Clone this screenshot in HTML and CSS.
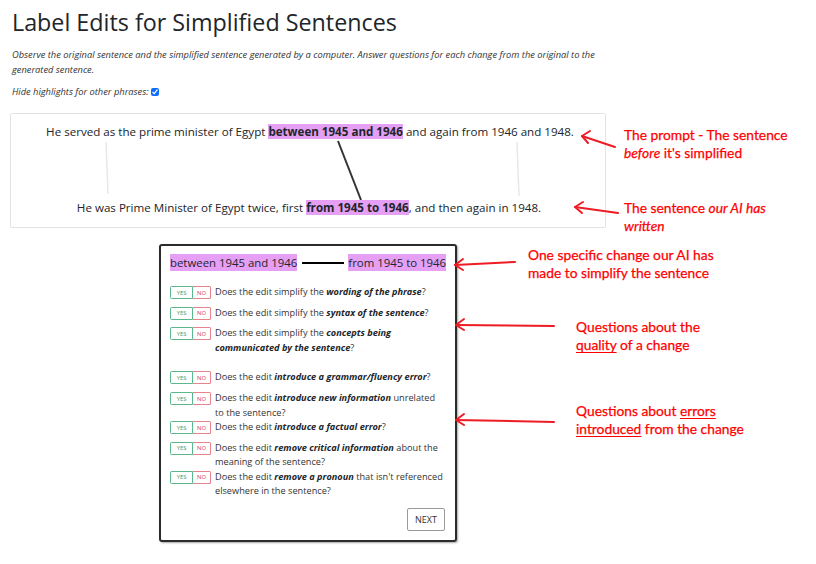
FILE: index.html
```html
<!DOCTYPE html>
<html>
<head>
<meta charset="utf-8">
<link rel="stylesheet" href="styles.css">
</head>
<body>
<div class="page">
  <h1 class="title">Label Edits for Simplified Sentences</h1>
  <p class="desc">Observe the original sentence and the simplified sentence generated by a computer. Answer questions for each change from the original to the generated sentence.</p>
  <label class="hide">Hide highlights for other phrases: <input type="checkbox" checked class="chk"></label>

  <div class="main">
    <div class="sentences">
      <svg class="links" width="596" height="115" viewBox="0 0 596 115">
        <line x1="95" y1="28" x2="97" y2="80" stroke="#e8e8e8" stroke-width="1.5"/>
        <line x1="506" y1="28" x2="508" y2="82" stroke="#e8e8e8" stroke-width="1.5"/>
        <line x1="327" y1="27" x2="350" y2="86" stroke="#333" stroke-width="2"/>
      </svg>
      <div class="sent s1">He served as the prime minister of Egypt <span class="hl b">between 1945 and 1946</span> and again from 1946 and 1948.</div>
      <div class="sent s2">He was Prime Minister of Egypt twice, first <span class="hl b">from 1945 to 1946</span>, and then again in 1948.</div>
    </div>

    <div class="card">
      <div class="edit-head">
        <span class="hl">between 1945 and 1946</span>
        <span class="dash"></span>
        <span class="hl">from 1945 to 1946</span>
      </div>
      <div class="group">
        <div class="q"><div class="yn"><span class="y">YES</span><span class="n">NO</span></div><div class="qt">Does the edit simplify the <b><i>wording of the phrase</i></b>?</div></div>
        <div class="q"><div class="yn"><span class="y">YES</span><span class="n">NO</span></div><div class="qt">Does the edit simplify the <b><i>syntax of the sentence</i></b>?</div></div>
        <div class="q"><div class="yn"><span class="y">YES</span><span class="n">NO</span></div><div class="qt">Does the edit simplify the <b><i>concepts being communicated by the sentence</i></b>?</div></div>
      </div>
      <div class="group last">
        <div class="q"><div class="yn"><span class="y">YES</span><span class="n">NO</span></div><div class="qt">Does the edit <b><i>introduce a grammar/fluency error</i></b>?</div></div>
        <div class="q"><div class="yn"><span class="y">YES</span><span class="n">NO</span></div><div class="qt">Does the edit <b><i>introduce new information</i></b> unrelated to the sentence?</div></div>
        <div class="q"><div class="yn"><span class="y">YES</span><span class="n">NO</span></div><div class="qt">Does the edit <b><i>introduce a factual error</i></b>?</div></div>
        <div class="q"><div class="yn"><span class="y">YES</span><span class="n">NO</span></div><div class="qt">Does the edit <b><i>remove critical information</i></b> about the meaning of the sentence?</div></div>
        <div class="q"><div class="yn"><span class="y">YES</span><span class="n">NO</span></div><div class="qt">Does the edit <b><i>remove a pronoun</i></b> that isn't referenced elsewhere in the sentence?</div></div>
      </div>
      <div class="foot"><button class="next">NEXT</button></div>
    </div>
  </div>
</div>

<svg class="arrows" width="816" height="564" viewBox="0 0 816 564">
  <g stroke="#ee1c24" stroke-width="2" fill="none" stroke-linecap="round" stroke-linejoin="round">
    <line x1="615" y1="147" x2="582" y2="136"/>
    <polyline points="590,131 582,136 588,143"/>
    <line x1="618" y1="213" x2="575" y2="207"/>
    <polyline points="583,202 575,207 582,213"/>
    <line x1="515" y1="262" x2="455" y2="265"/>
    <polyline points="463,259 455,265 463,270"/>
    <line x1="554" y1="326" x2="456" y2="325"/>
    <polyline points="464,319 456,325 464,330"/>
    <line x1="554" y1="422" x2="456" y2="420"/>
    <polyline points="464,414 456,420 464,425"/>
  </g>
</svg>
<div class="note n1">The prompt - The sentence<br><i>before</i> it's simplified</div>
<div class="note n2">The sentence <i>our AI has<br>written</i></div>
<div class="note n3">One specific change our AI has<br>made to simplify the sentence</div>
<div class="note n4">Questions about the<br><u>quality</u> of a change</div>
<div class="note n5">Questions about <u>errors<br>introduced</u> from the change</div>
</body>
</html>
```
FILE: styles.css
```css
html, body {
  margin: 0;
  padding: 0;
  background: #fff;
}
body {
  font-family: "Open Sans", "Noto Sans", sans-serif;
  color: #212529;
  position: relative;
  width: 816px;
  height: 564px;
  overflow: hidden;
}
.page {
  padding: 6px 0 0 12px;
}
.title {
  font-size: 23.3px;
  font-weight: 500;
  margin: 0 0 9px 0;
  line-height: 32px;
}
.desc {
  font-style: italic;
  font-size: 9.3px;
  line-height: 15px;
  margin: 0 0 8px 0;
  width: 600px;
  color: #333;
}
.hide {
  display: flex;
  align-items: center;
  font-style: italic;
  font-size: 9.3px;
  line-height: 14px;
  color: #333;
}
.chk {
  margin: 0 0 0 2px;
  width: 8px;
  height: 8px;
  accent-color: #0d6efd;
}
.main {
  width: 596px;
  margin: 14px 0 0 -2px;
}
.sentences {
  position: relative;
  border: 1px solid #e3e3e3;
  border-radius: 2px;
  height: 113px;
  display: flex;
  flex-direction: column;
  align-items: center;
  font-size: 11.6px;
}
.links {
  position: absolute;
  left: 0;
  top: 0;
}
.sent {
  position: relative;
  line-height: 17px;
  white-space: nowrap;
}
.s1 { margin-top: 8.5px; left: 2px; }
.s2 { margin-top: 59.5px; left: 1px; }
.hl {
  background: #e5a0f5;
}
.b { font-weight: 700; }
.card {
  box-sizing: border-box;
  width: 298px;
  margin: 16px auto 0;
  border: 2px solid #2b2b2b;
  border-radius: 3px;
  box-shadow: 1px 1px 2px rgba(0,0,0,0.35);
  padding: 8px 9px 9px 9px;
  font-size: 9.2px;
}
.edit-head {
  display: flex;
  align-items: center;
  font-size: 11.4px;
  line-height: 17px;
  margin-bottom: 14px;
  white-space: nowrap;
}
.edit-head .hl { flex: none; }
.dash {
  flex: none;
  width: 42px;
  height: 2px;
  background: #000;
  margin: 0 4px 0 5px;
}
.group {
  margin-bottom: 15px;
}
.group.last { margin-bottom: 9px; }
.q {
  display: flex;
  align-items: flex-start;
  min-height: 20.7px;
}
.yn {
  display: flex;
  flex: none;
  height: 13px;
  margin: 1px 4px 0 0;
  font-size: 5.8px;
}
.yn span {
  display: flex;
  align-items: center;
  justify-content: center;
  border: 1px solid;
  border-radius: 1.5px;
}
.y {
  width: 21px;
  border-color: #5cb88a !important;
  color: #3f9a6c;
  border-top-right-radius: 0 !important;
  border-bottom-right-radius: 0 !important;
}
.n {
  width: 17px;
  border-color: #e8828c !important;
  color: #dc3545;
  border-left: none !important;
  border-top-left-radius: 0 !important;
  border-bottom-left-radius: 0 !important;
}
.qt {
  line-height: 14.5px;
  color: #333;
}
.qt b { color: #212529; }
.foot {
  display: flex;
  justify-content: flex-end;
}
.next {
  font-family: inherit;
  font-size: 9px;
  color: #333;
  background: #fff;
  border: 1px solid #999;
  border-radius: 2px;
  width: 38px;
  height: 23px;
  padding: 0;
  margin-right: 1px;
}
.arrows {
  position: absolute;
  left: 0;
  top: 0;
  pointer-events: none;
}
.note {
  position: absolute;
  font-family: Lato, "Liberation Sans", sans-serif;
  color: #f00;
  font-size: 13.8px;
  line-height: 18px;
  white-space: nowrap;
  -webkit-text-stroke: 0.25px #f00;
}
.note u { text-decoration-thickness: 1px; text-underline-offset: 2px; }
.n1 { left: 624px; top: 126px; }
.n2 { left: 624px; top: 199px; }
.n3 { left: 528px; top: 246px; }
.n4 { left: 576px; top: 318px; }
.n5 { left: 576px; top: 402px; }
```
